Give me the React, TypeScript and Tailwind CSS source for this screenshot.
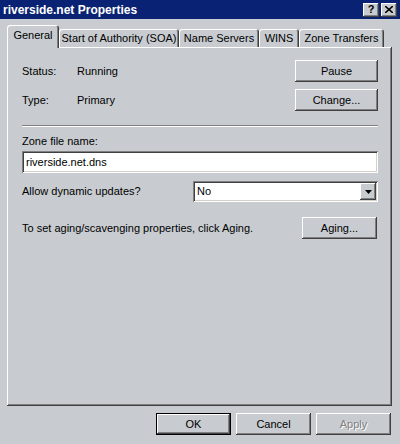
import React from 'react';

const raised = 'shadow-[inset_-1px_-1px_#404040,inset_1px_1px_#ffffff,inset_-2px_-2px_#808080]';
const sunken = 'shadow-[inset_1px_1px_#808080,inset_-1px_-1px_#ffffff,inset_2px_2px_#404040,inset_-2px_-2px_#d4d0c8]';

interface ButtonProps {
    label: string;
    width: string;
    isDefault?: boolean;
    disabled?: boolean;
}

const Button: React.FC<ButtonProps> = ({ label, width, isDefault, disabled }) => {
    if (isDefault) {
        return (
            <div className={`${width} h-[22px] border border-black flex`}>
                <div className={`flex-1 flex items-center justify-center ${raised}`}>{label}</div>
            </div>
        );
    }
    return (
        <div className={`${width} h-[22px] flex items-center justify-center ${raised}`}>
            <span className={disabled ? 'text-[#808080] [text-shadow:1px_1px_0_#ffffff]' : ''}>{label}</span>
        </div>
    );
};

const tabs = [
    { label: 'Start of Authority (SOA)', width: 'w-[120px]' },
    { label: 'Name Servers', width: 'w-[80px]' },
    { label: 'WINS', width: 'w-[40px]' },
    { label: 'Zone Transfers', width: 'w-[85px]' },
];

export default function App() {
    return (
        <div className="w-[400px] h-[444px] bg-[#c8ccd0] flex flex-col text-[11px] leading-[13px] text-black [font-family:'Liberation_Sans',Arial,sans-serif]">
            {/* title bar */}
            <div className="h-[19px] bg-[#0a2274] flex items-center justify-between pl-[3px] pr-[3px]">
                <span className="text-white font-bold text-[12px] leading-[14px]">riverside.net Properties</span>
                <div className="flex gap-[2px]">
                    <div className={`w-[16px] h-[14px] bg-[#c8ccd0] flex items-center justify-center font-bold text-[11px] ${raised}`}>?</div>
                    <div className={`w-[16px] h-[14px] bg-[#c8ccd0] flex items-center justify-center ${raised}`}>
                        <svg width="8" height="7" viewBox="0 0 8 7">
                            <path d="M0 0 L8 7 M8 0 L0 7" stroke="#000" strokeWidth="1.6" />
                        </svg>
                    </div>
                </div>
            </div>

            <div className="flex flex-col pl-[7px] pr-[8px] pt-[6px]">
                {/* tabs */}
                <div className="flex items-end h-[22px]">
                    <div className="relative z-10 -mb-px w-[52px] h-[23px] bg-[#c8ccd0] rounded-t-[3px] shadow-[inset_1px_1px_#ffffff,inset_-1px_0_#404040,inset_-2px_0_#808080] flex justify-center pt-[4px]">
                        General
                    </div>
                    {tabs.map((t) => (
                        <div
                            key={t.label}
                            className={`${t.width} h-[18px] rounded-t-[3px] shadow-[inset_1px_1px_#ffffff,inset_-1px_0_#404040,inset_-2px_0_#808080] flex justify-center pt-[3px]`}
                        >
                            {t.label}
                        </div>
                    ))}
                </div>

                {/* panel */}
                <div className={`h-[359px] flex flex-col pl-[15px] pr-[14px] pt-[13px] ${raised}`}>
                    <div className="flex flex-col gap-[7px]">
                        <div className="flex items-center">
                            <span className="w-[55px]">Status:</span>
                            <span>Running</span>
                            <div className="ml-auto">
                                <Button label="Pause" width="w-[83px]" />
                            </div>
                        </div>
                        <div className="flex items-center">
                            <span className="w-[55px]">Type:</span>
                            <span>Primary</span>
                            <div className="ml-auto">
                                <Button label="Change..." width="w-[83px]" />
                            </div>
                        </div>
                    </div>

                    <div className="mt-[14px] border-t border-b border-t-[#808080] border-b-white" />

                    <div className="mt-[8px]">Zone file name:</div>
                    <div className={`mt-[3px] h-[22px] bg-white flex items-center pl-[4px] ${sunken}`}>riverside.net.dns</div>

                    <div className="mt-[8px] flex items-center">
                        <span>Allow dynamic updates?</span>
                        <div className={`ml-auto w-[185px] h-[21px] bg-white flex items-center p-[2px] ${sunken}`}>
                            <span className="flex-1 pl-[2px]">No</span>
                            <div className={`w-[16px] h-[17px] bg-[#c8ccd0] flex items-center justify-center ${raised}`}>
                                <svg width="7" height="4" viewBox="0 0 7 4">
                                    <path d="M0 0 H7 L3.5 4 Z" fill="#000" />
                                </svg>
                            </div>
                        </div>
                    </div>

                    <div className="mt-[15px] flex items-center">
                        <span>To set aging/scavenging properties, click Aging.</span>
                        <div className="ml-auto mr-[1px]">
                            <Button label="Aging..." width="w-[75px]" />
                        </div>
                    </div>
                </div>

                {/* bottom buttons */}
                <div className="mt-[7px] flex justify-end gap-[5px] pr-px">
                    <Button label="OK" width="w-[75px]" isDefault />
                    <Button label="Cancel" width="w-[75px]" />
                    <Button label="Apply" width="w-[75px]" disabled />
                </div>
            </div>
        </div>
    );
}
